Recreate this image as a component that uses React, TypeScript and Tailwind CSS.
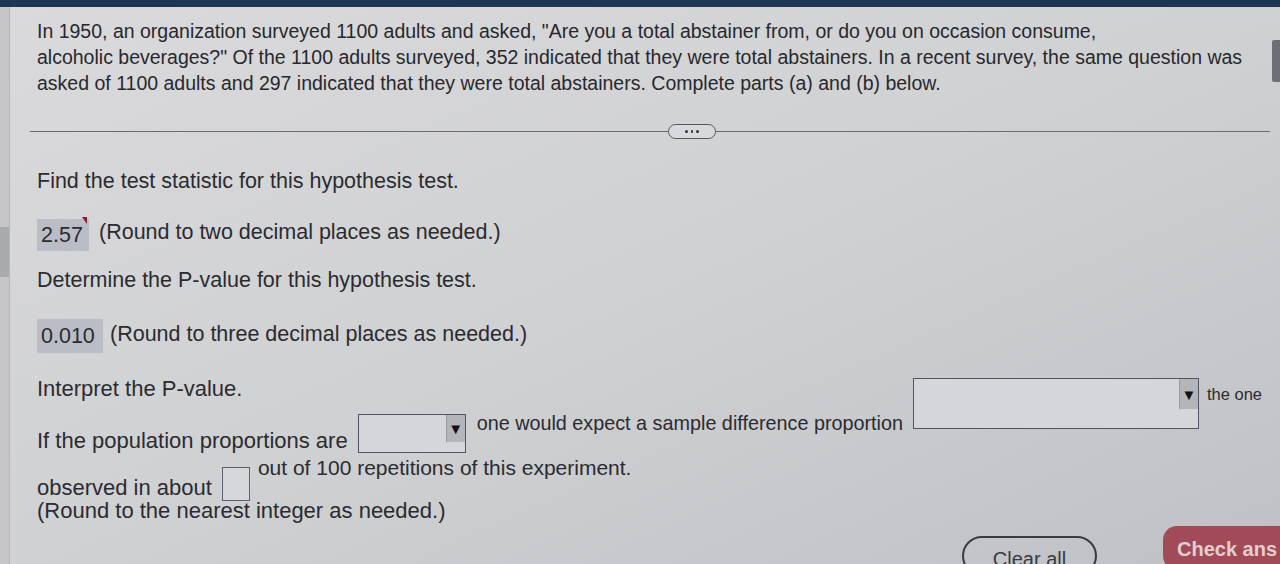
import React from 'react';

function Select({ w, h, arrowH }: { w: string; h: string; arrowH: string }) {
  return (
    <div className={`${w} ${h} border border-[#4f5566] bg-[#d5d6d9] flex justify-end shrink-0`}>
      <div className={`w-[19px] ${arrowH} bg-[#b4b5ba] border-l border-[#9a9ca3] flex items-center justify-center`}>
        <span className="text-[15px] leading-none text-[#111]">▼</span>
      </div>
    </div>
  );
}

export default function App() {
  return (
    <div className="w-[1280px] h-[564px] overflow-hidden bg-linear-to-br from-[#dadadc] via-[#d0d1d3] to-[#c0c1c5] font-['Liberation_Sans',Arial,sans-serif] text-[21.5px] text-[#2b2b30]">
      <div className="h-[7px] bg-[#1e3652]" />
      <div className="flex h-[557px]">
        {/* left gutter */}
        <div className="w-[10px] shrink-0 bg-[#c6c6c9] border-r border-[#b3b4b8] flex flex-col">
          <div className="h-[220px]" />
          <div className="h-[50px] bg-[#a9aaae]" />
        </div>

        <div className="flex-1 pl-[27px] flex flex-col">
          {/* question stem */}
          <p className="mt-[11px] leading-[26px] text-[19.5px] text-[#28282d]">
            In 1950, an organization surveyed 1100 adults and asked, "Are you a total abstainer from, or do you on occasion consume,
            <br />
            alcoholic beverages?" Of the 1100 adults surveyed, 352 indicated that they were total abstainers. In a recent survey, the same question was
            <br />
            asked of 1100 adults and 297 indicated that they were total abstainers. Complete parts (a) and (b) below.
          </p>

          {/* divider */}
          <div className="-ml-[7px] mt-[28px] flex items-center">
            <div className="w-[638px] h-[1.5px] bg-[#6b6c72]" />
            <div className="w-[48px] h-[15px] rounded-full border-[1.5px] border-[#55575e] bg-[#d8d9dc] flex items-center justify-center gap-[3px]">
              <span className="w-[2.5px] h-[2.5px] rounded-full bg-[#333]" />
              <span className="w-[2.5px] h-[2.5px] rounded-full bg-[#333]" />
              <span className="w-[2.5px] h-[2.5px] rounded-full bg-[#333]" />
            </div>
            <div className="flex-1 h-[1.5px] bg-[#6b6c72]" />
          </div>

          <div className="mt-[30px] leading-[24px]">Find the test statistic for this hypothesis test.</div>

          <div className="mt-[26px] flex items-center">
            <div className="relative w-[52px] h-[32px] bg-[#babdc5] flex items-center pl-[4px]">
              2.57
              <div className="absolute -top-[2px] right-[2px] w-0 h-0 border-l-[5px] border-l-transparent border-t-[7px] border-t-[#8b1c24]" />
            </div>
            <span className="ml-[10px] -mt-[6px]">(Round to two decimal places as needed.)</span>
          </div>

          <div className="mt-[17px] leading-[24px]">Determine the P-value for this hypothesis test.</div>

          <div className="mt-[27px] flex items-center">
            <div className="w-[66px] h-[34px] bg-[#babdc5] flex items-center pl-[4px]">0.010</div>
            <span className="ml-[7px] -mt-[3px]">(Round to three decimal places as needed.)</span>
          </div>

          <div className="mt-[24px] leading-[24px] text-[22px]">Interpret the P-value.</div>

          {/* fill-in row */}
          <div className="flex items-start leading-[24px]">
            <span className="mt-[28px] text-[22px]">If the population proportions are</span>
            <div className="ml-[10px] mt-[13px]">
              <Select w="w-[108px]" h="h-[39px]" arrowH="h-[27px]" />
            </div>
            <span className="ml-[11px] mt-[10px] text-[19.8px]">one would expect a sample difference proportion</span>
            <div className="ml-[10px] -mt-[23px]">
              <Select w="w-[286px]" h="h-[51px]" arrowH="h-[30px]" />
            </div>
            <span className="ml-[8px] -mt-[19px] text-[16.5px]">the one</span>
          </div>

          <div className="flex items-start leading-[24px]">
            <span className="mt-[23px] text-[22px]">observed in about</span>
            <div className="ml-[10px] mt-[14px] w-[28px] h-[34px] border border-[#5c6170] bg-[#d6d7da]" />
            <span className="ml-[8px] mt-[3px] text-[21px]">out of 100 repetitions of this experiment.</span>
          </div>

          <div className="-mt-[2px] leading-[24px] text-[22px]">(Round to the nearest integer as needed.)</div>

          {/* buttons */}
          <div className="flex items-start justify-end -mr-[20px]">
            <div className="mt-[13px] w-[135px] h-[40px] rounded-full border-2 border-[#3a3b40] flex justify-center pt-[6px] text-[20px] text-[#3a3b40]">
              Clear all
            </div>
            <div className="ml-[66px] mt-[3px] w-[127px] h-[44px] rounded-l-[14px] bg-[#a04b57] flex pl-[14px] pt-[8px] font-bold text-[20px] text-[#e6cdd1]">
              Check ans
            </div>
          </div>
        </div>

        {/* right scrollbar */}
        <div className="w-[10px] shrink-0 flex flex-col">
          <div className="h-[33px]" />
          <div className="h-[42px] w-[8px] ml-[2px] bg-[#6d6f75] rounded-l-[2px]" />
        </div>
      </div>
    </div>
  );
}
